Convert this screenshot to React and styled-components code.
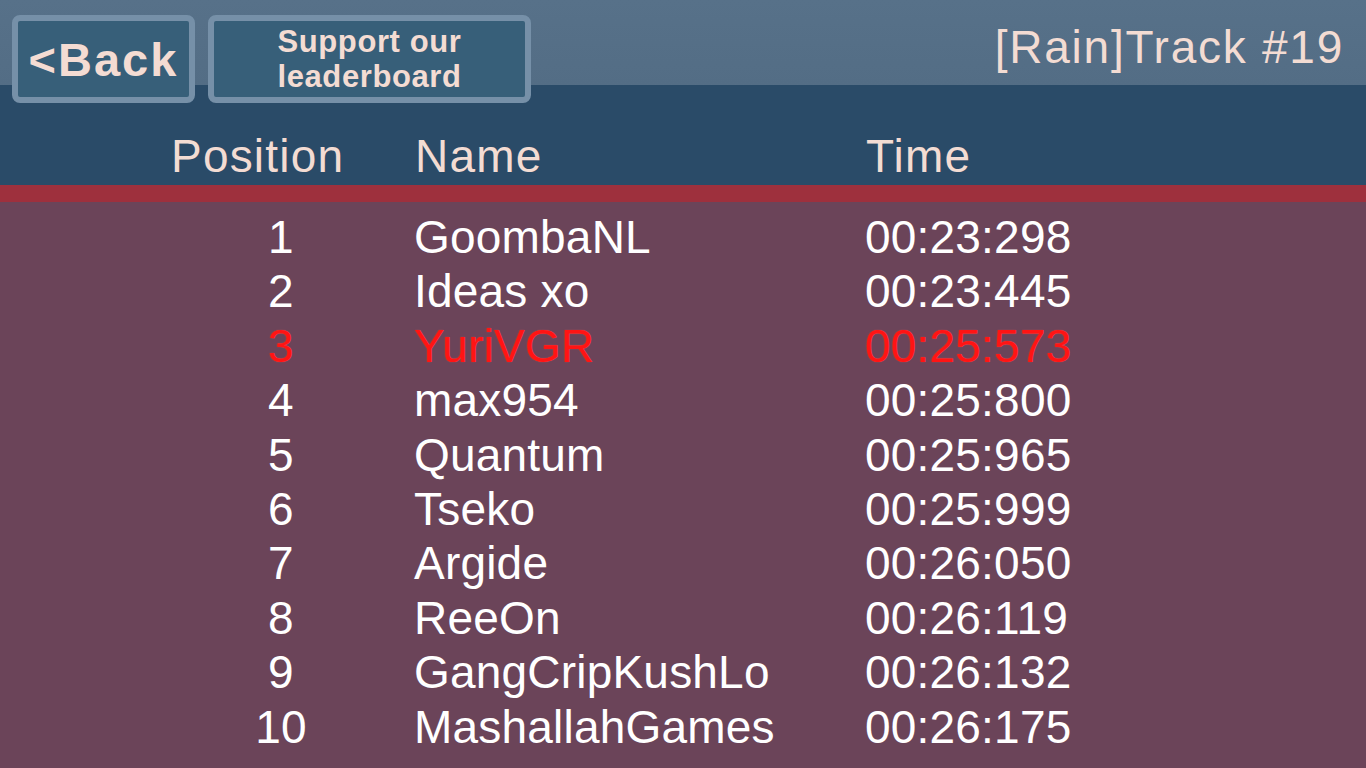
import React from 'react';
import styled, { createGlobalStyle } from 'styled-components';

const rows = [
  { pos: 1, name: 'GoombaNL', time: '00:23:298' },
  { pos: 2, name: 'Ideas xo', time: '00:23:445' },
  { pos: 3, name: 'YuriVGR', time: '00:25:573', me: true },
  { pos: 4, name: 'max954', time: '00:25:800' },
  { pos: 5, name: 'Quantum', time: '00:25:965' },
  { pos: 6, name: 'Tseko', time: '00:25:999' },
  { pos: 7, name: 'Argide', time: '00:26:050' },
  { pos: 8, name: 'ReeOn', time: '00:26:119' },
  { pos: 9, name: 'GangCripKushLo', time: '00:26:132' },
  { pos: 10, name: 'MashallahGames', time: '00:26:175' },
];

const App = () => {
  return (
    <>
      <GlobalStyle />
      <Screen>
        <Header>
          <Toolbar>
            <BackButton>&lt;Back</BackButton>
            <SupportButton>
              Support our
              <br />
              leaderboard
            </SupportButton>
            <Title>[Rain]Track #19</Title>
          </Toolbar>
          <ColumnHeads>
            <HeadCell>Position</HeadCell>
            <HeadCell>Name</HeadCell>
            <HeadCell>Time</HeadCell>
          </ColumnHeads>
        </Header>
        <Divider />
        <Board>
          {rows.map((r) => (
            <Row key={r.pos} $me={r.me}>
              <PosCell>{r.pos}</PosCell>
              <div>{r.name}</div>
              <div>{r.time}</div>
            </Row>
          ))}
        </Board>
      </Screen>
    </>
  );
};

const GlobalStyle = createGlobalStyle`
  html, body {
    margin: 0;
    padding: 0;
    background: #6b4459;
  }
  body {
    font-family: "Liberation Sans", Arial, sans-serif;
  }
`;

const Screen = styled.div`
  width: 1366px;
  height: 768px;
  overflow: hidden;
  display: flex;
  flex-direction: column;
  background: #6b4459;
`;

const Header = styled.header`
  height: 185px;
  background: linear-gradient(
    to bottom,
    #577189 0,
    #536d85 85px,
    #2a4b68 85px,
    #2a4b68 100%
  );
`;

const Toolbar = styled.div`
  display: flex;
  align-items: flex-start;
  gap: 13px;
  padding: 15px 24px 0 12px;
  height: 88px;
`;

const ButtonBase = styled.div`
  box-sizing: border-box;
  height: 88px;
  border: 6px solid #7690a8;
  border-radius: 8px;
  background: #375f79;
  color: #f4dcd3;
  font-weight: bold;
  display: flex;
  align-items: center;
  justify-content: center;
  text-align: center;
`;

const BackButton = styled(ButtonBase)`
  width: 183px;
  font-size: 47px;
  letter-spacing: 2px;
  white-space: nowrap;
`;

const SupportButton = styled(ButtonBase)`
  width: 323px;
  font-size: 31px;
  letter-spacing: 0.6px;
  line-height: 35px;
`;

const Title = styled.div`
  margin-left: auto;
  margin-top: 9px;
  margin-right: -2px;
  font-size: 46px;
  line-height: 46px;
  letter-spacing: 1.75px;
  color: #f3dcd3;
`;

const Columns = styled.div`
  display: grid;
  grid-template-columns: 220px 451px 1fr;
  gap: 0 24px;
  padding-left: 171px;
`;

const ColumnHeads = styled(Columns)`
  margin-top: 29px;
  font-size: 46px;
  line-height: 48px;
  letter-spacing: 1.2px;
  color: #f3dcd3;
`;

const HeadCell = styled.div`
  &:nth-child(3) {
    margin-left: -24px;
  }
`;

const Divider = styled.div`
  height: 17px;
  background: #9e303d;
`;

const Board = styled.main`
  padding-top: 8px;
`;

const Row = styled(Columns)`
  font-size: 46px;
  line-height: 54.4px;
  letter-spacing: 0.2px;
  color: ${(p) => (p.$me ? '#ff1414' : '#ffffff')};
  text-shadow: ${(p) => (p.$me ? '0 0 1px #ff5050' : 'none')};

  & > div:nth-child(2) {
    margin-left: -1px;
  }

  & > div:nth-child(3) {
    margin-left: -25px;
  }
`;

const PosCell = styled.div`
  text-align: center;
`;

export default App;
